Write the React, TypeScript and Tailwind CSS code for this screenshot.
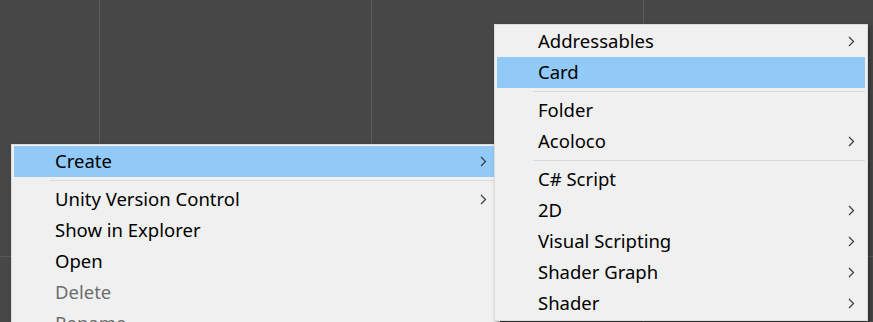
type Item = { label?: string; sub?: boolean; active?: boolean; disabled?: boolean; sep?: boolean };

const leftItems: Item[] = [
  { label: "Create", sub: true, active: true },
  { sep: true },
  { label: "Unity Version Control", sub: true },
  { label: "Show in Explorer" },
  { label: "Open" },
  { label: "Delete", disabled: true },
  { label: "Rename", disabled: true },
];

const rightItems: Item[] = [
  { label: "Addressables", sub: true },
  { label: "Card", active: true },
  { sep: true },
  { label: "Folder" },
  { label: "Acoloco", sub: true },
  { sep: true },
  { label: "C# Script" },
  { label: "2D", sub: true },
  { label: "Visual Scripting", sub: true },
  { label: "Shader Graph", sub: true },
  { label: "Shader", sub: true },
];

const Chevron = () => (
  <svg width="7" height="11" viewBox="0 0 7 11" className="shrink-0">
    <polyline points="1,1 5.5,5.5 1,10" fill="none" stroke="#3a3a3a" strokeWidth="1.2" />
  </svg>
);

const MenuRow = ({ item }: { item: Item }) => {
  if (item.sep) {
    return (
      <div className="h-[7px] flex items-center pl-[36px]">
        <div className="h-px w-full bg-[#d9d9d9]" />
      </div>
    );
  }
  return (
    <div
      className={`h-[31px] shrink-0 flex items-center justify-between pl-[41px] pr-[10px] ${
        item.active ? "bg-[#91c9f7]" : ""
      }`}
    >
      <span
        className={`leading-none pb-[1px] ${item.disabled ? "text-[#6d6d6d]" : "text-black"}`}
      >
        {item.label}
      </span>
      {item.sub && <Chevron />}
    </div>
  );
};

const Menu = ({ items, className }: { items: Item[]; className: string }) => (
  <div
    className={`absolute flex flex-col bg-[#f0f0f0] border border-[#dcdcdc] px-[2px] py-[1px] shadow-[2px_2px_4px_rgba(0,0,0,0.35)] ${className}`}
  >
    {items.map((it, i) => (
      <MenuRow key={i} item={it} />
    ))}
  </div>
);

export default function App() {
  return (
    <div
      className="relative w-[873px] h-[322px] overflow-hidden bg-[#474747] text-[18.5px]"
      style={{ fontFamily: '"Noto Sans", "Noto Sans CJK SC", sans-serif' }}
    >
      {/* scene grid */}
      <div className="absolute left-[99px] top-0 h-full w-px bg-[#5a5a5a]" />
      <div className="absolute left-[371px] top-0 h-full w-px bg-[#5a5a5a]" />
      <div className="absolute left-[643px] top-0 h-full w-px bg-[#5a5a5a]" />
      <div className="absolute left-0 top-[256px] w-full h-px bg-[#5a5a5a]" />

      <Menu items={leftItems} className="left-[11px] top-[144px] w-[489px] z-10" />
      <Menu items={rightItems} className="left-[494px] top-[24px] w-[374px] z-20" />
    </div>
  );
}
